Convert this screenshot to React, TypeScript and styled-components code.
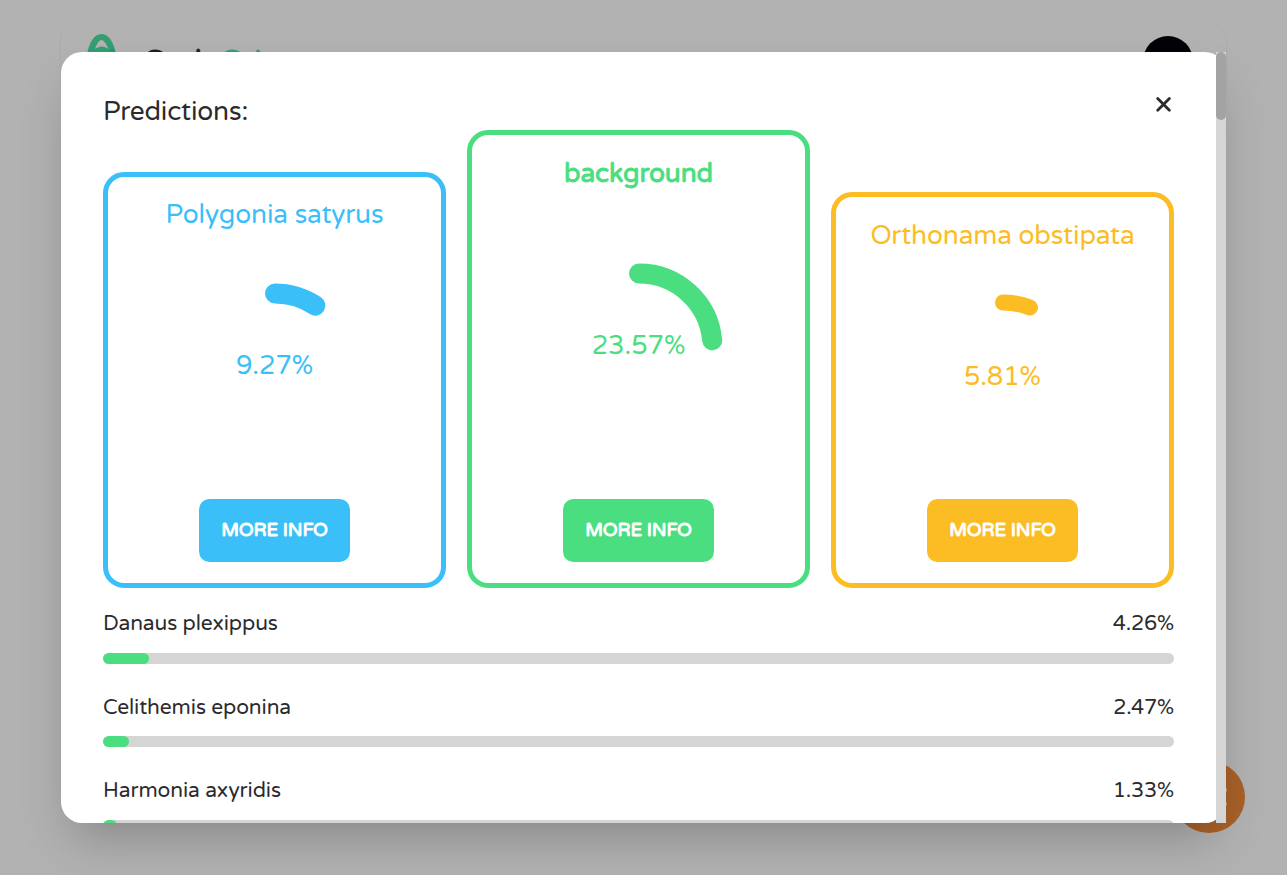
import React from 'react';
import styled, { createGlobalStyle } from 'styled-components';

const Global = createGlobalStyle`
  * { box-sizing: border-box; }
  html { font-size: 21px; }
  body {
    margin: 0;
    overflow: hidden;
    background: #b2b2b2;
    color: #2b2b2e;
    font-family: 'Varela Round', 'Noto Sans', sans-serif;
  }
`;

const Screen = styled.div`
  position: relative;
  height: 875px;
  padding: 21px 61px;
  overflow: hidden;
`;

const Header = styled.header`
  display: flex;
  align-items: center;
  justify-content: space-between;
  height: 84px;
  padding: 0 33px 0 25px;
  border-radius: 21px;
  box-shadow: 0 1px 3px rgba(0, 0, 0, 0.08);
`;

const Brand = styled.div`
  display: flex;
  align-items: center;
  gap: 24.5px;
  font-size: 31.5px;
  line-height: 50px;
  letter-spacing: -0.4px;
  color: #1e1e22;
  -webkit-text-stroke: 0.8px currentColor;
`;

const BrandAccent = styled.span`
  color: #32a070;
`;

const Avatar = styled.div`
  width: 50px;
  height: 50px;
  margin-top: -4px;
  border-radius: 50%;
  background: #020307;
`;

const ChatButton = styled.div`
  position: absolute;
  left: 1173px;
  top: 761px;
  width: 72px;
  height: 72px;
  border-radius: 50%;
  display: flex;
  align-items: center;
  justify-content: flex-end;
  padding-right: 17px;
  background: #a96128;
`;

const Modal = styled.section`
  position: absolute;
  left: 61px;
  top: 52px;
  width: 1165px;
  height: 771px;
  display: flex;
  border-radius: 21px;
  background: #fff;
  box-shadow: 0 25px 50px -12px rgba(0, 0, 0, 0.25);
`;

const Content = styled.div`
  flex: 1;
  height: 771px;
  padding: 42px 42px 0;
  overflow: hidden;
  border-radius: 0 0 0 21px;
`;

const Scrollbar = styled.div`
  width: 10px;
  background: #d5d5d5;
`;

const Thumb = styled.div`
  height: 68px;
  border-radius: 5px;
  background: #a3a3a3;
`;

const Top = styled.div`
  display: flex;
  justify-content: space-between;
  height: 36px;
`;

const Title = styled.h2<{ $track: string; $bold?: boolean }>`
  margin: 0;
  font-size: 26.25px;
  line-height: 36px;
  font-weight: 400;
  -webkit-text-stroke: ${(p) => (p.$bold ? '0.9px currentColor' : '0')};
  letter-spacing: ${(p) => p.$track};
  white-space: nowrap;
`;

const Close = styled.button`
  width: 22px;
  height: 22px;
  padding: 0;
  border: 0;
  background: none;
`;

const Cards = styled.div`
  display: grid;
  grid-template-columns: repeat(3, 343px);
  gap: 21px;
  align-items: end;
  height: 458px;
`;

const Card = styled.article<{ $color: string; $height: number }>`
  display: flex;
  flex-direction: column;
  align-items: center;
  justify-content: space-between;
  height: ${(p) => p.$height}px;
  padding: ${(p) => (p.$height === 416 ? 20 : 21)}px 21px 21px;
  border: 5px solid ${(p) => p.$color};
  border-radius: 21px;
  color: ${(p) => p.$color};
`;

const Gauge = styled.div<{ $drop: number }>`
  display: grid;
  place-items: center;
  width: 168px;
  height: 168px;
  margin-top: ${(p) => p.$drop}px;
  font-size: 26.25px;
  line-height: 36px;

  > * { grid-area: 1 / 1; }
`;

const GaugeValue = styled.span`
  margin-top: -2px;
  letter-spacing: -0.1px;
`;

const InfoButton = styled.button<{ $color: string }>`
  width: 151px;
  height: 63px;
  padding: 0 0 2px;
  border: 0;
  border-radius: 10.5px;
  background: ${(p) => p.$color};
  color: #fff;
  font: 400 18.4px 'Varela Round', 'Noto Sans', sans-serif;
  letter-spacing: -0.15px;
  -webkit-text-stroke: 1px currentColor;
`;

const Row = styled.div`
  height: 83.5px;
  padding-top: 20px;
`;

const RowLabels = styled.div`
  display: flex;
  justify-content: space-between;
  font-size: 21px;
  line-height: 31.5px;
`;

const Label = styled.span<{ $track: string }>`
  letter-spacing: ${(p) => p.$track};
`;

const Track = styled.div`
  height: 11px;
  margin-top: 13.4px;
  border-radius: 5.5px;
  overflow: hidden;
  background: #d5d5d5;
`;

const Fill = styled.div`
  height: 100%;
  border-radius: 5.5px;
  background: #4ade80;
`;

interface Prediction {
  name: string;
  value: number;
  color: string;
  height: number;
  stroke: number;
  track: string;
  drop: number;
  bold?: boolean;
}

const top3: Prediction[] = [
  { name: 'Polygonia satyrus', value: 9.27, color: '#3abff8', height: 416, stroke: 20, track: '-0.12px', drop: 1 },
  { name: 'background', value: 23.57, color: '#4ade80', height: 458, stroke: 20, track: '-0.1px', drop: 2.5, bold: true },
  { name: 'Orthonama obstipata', value: 5.81, color: '#fbbd23', height: 396, stroke: 16, track: '-0.14px', drop: 2.5 },
];

const rest = [
  { name: 'Danaus plexippus', value: 4.26 },
  { name: 'Celithemis eponina', value: 2.47 },
  { name: 'Harmonia axyridis', value: 1.33 },
];

function Arc({ value, stroke }: { value: number; stroke: number }) {
  const r = 83.5 - stroke / 2;
  const a = (value / 100) * Math.PI * 2;
  return (
    <svg width="168" height="168" viewBox="0 0 168 168">
      <path
        d={`M84 ${84 - r}A${r} ${r} 0 0 1 ${84 + r * Math.sin(a)} ${84 - r * Math.cos(a)}`}
        fill="none"
        stroke="currentColor"
        strokeWidth={stroke}
        strokeLinecap="round"
      />
    </svg>
  );
}

export default function App() {
  return (
    <Screen>
      <Global />
      <Header>
        <Brand>
          <svg width="32" height="58" viewBox="0 0 32 58">
            <path d="M0 24C3 8 8 0 15.500 0S28 8 31 24z" fill="#329e72" />
            <path d="M9 15C11 9.500 13 6 15.500 6S20 9.500 22.500 15C18 11.500 13.500 11.500 9 15z" fill="#b2b2b2" />
            <path d="M17 24c4-3 7-6 8-9l3 0 3 9z" fill="#2c8f82" />
          </svg>
          <span>Code<BrandAccent>Gri</BrandAccent></span>
        </Brand>
        <Avatar />
      </Header>
      <ChatButton>
        <svg width="8" height="20" viewBox="0 0 8 20" fill="#b9b2ac">
          <circle cx="5" cy="3" r="2" />
          <circle cx="5" cy="17" r="2" />
        </svg>
      </ChatButton>
      <Modal>
        <Content>
          <Top>
            <Title $track="-0.16px">Predictions:</Title>
            <Close aria-label="Close">
              <svg width="22" height="22" viewBox="0 0 22 22" stroke="#2b2b2e" strokeWidth="2.8" strokeLinecap="round">
                <path d="M5.700 4.500l11.700 11.700M17.400 4.500l-11.700 11.700" />
              </svg>
            </Close>
          </Top>
          <Cards>
            {top3.map((p) => (
              <Card key={p.name} $color={p.color} $height={p.height}>
                <Title $track={p.track} $bold={p.bold}>{p.name}</Title>
                <Gauge $drop={p.drop}>
                  <Arc value={p.value} stroke={p.stroke} />
                  <GaugeValue>{p.value}%</GaugeValue>
                </Gauge>
                <InfoButton $color={p.color}>MORE INFO</InfoButton>
              </Card>
            ))}
          </Cards>
          {rest.map((r) => (
            <Row key={r.name}>
              <RowLabels>
                <Label $track="-0.1px">{r.name}</Label>
                <Label $track="-0.2px">{r.value}%</Label>
              </RowLabels>
              <Track>
                <Fill style={{ width: `${r.value}%` }} />
              </Track>
            </Row>
          ))}
        </Content>
        <Scrollbar><Thumb /></Scrollbar>
      </Modal>
    </Screen>
  );
}
